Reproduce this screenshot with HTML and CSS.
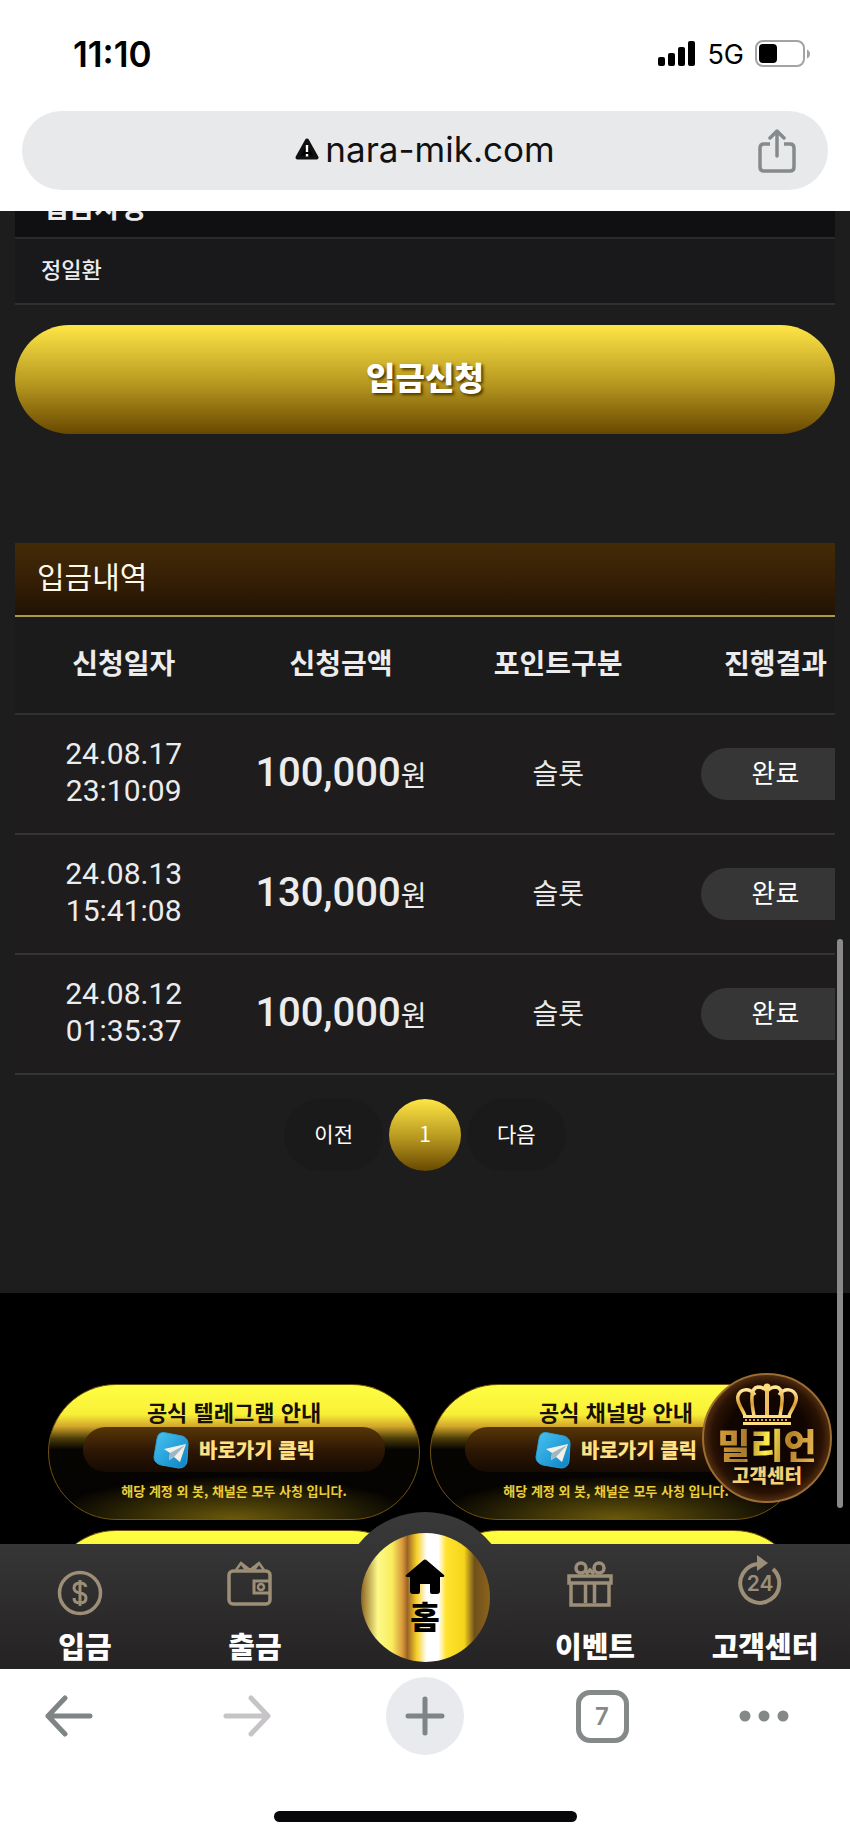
FILE: index.html
```html
<!DOCTYPE html>
<html lang="ko">
<head>
<meta charset="utf-8">
<meta name="viewport" content="width=device-width, initial-scale=1">
<title>nara-mik.com</title>
<link rel="stylesheet" href="styles.css">
</head>
<body>
<div class="phone">
  <header class="browser-top">
    <div class="status">
      <span class="clock">11:10</span>
      <div class="status-right">
        <svg width="38" height="26" viewBox="0 0 38 26" aria-hidden="true"><rect x="0" y="16" width="7" height="9" rx="2"/><rect x="10" y="12" width="7" height="13" rx="2"/><rect x="20" y="6" width="7" height="19" rx="2"/><rect x="30" y="0" width="7" height="25" rx="2"/></svg>
        <span class="network">5G</span>
        <svg width="56" height="28" viewBox="0 0 56 28" aria-hidden="true"><rect x="1" y="1" width="48" height="25" rx="7" fill="none" stroke="#a3a3a5" stroke-width="2"/><rect x="4" y="4" width="18" height="19" rx="4"/><path d="M52 9.500q3 1.500 3 4.500t-3 4.500z" fill="#a3a3a5"/></svg>
      </div>
    </div>
    <div class="address">
      <a class="url" href="#"><svg width="24" height="22" viewBox="0 0 24 22" aria-hidden="true"><path d="M12 2.500 21.500 19.500H2.500z" stroke="#111" stroke-width="4" stroke-linejoin="round"/><path d="M12 7v7M12 16v2.500" stroke="#fff" stroke-width="2.400"/></svg>nara-mik.com</a>
      <button class="share" aria-label="공유"><svg width="38" height="44" viewBox="0 0 38 44" fill="none" stroke="#868a8c" stroke-width="3.500" stroke-linecap="round" stroke-linejoin="round"><path d="M12 15H6q-4 0-4 4v19q0 4 4 4h26q4 0 4-4V19q0-4-4-4h-6" stroke-linecap="butt"/><path d="M19 27V3M12 9l7-7 7 7"/></svg></button>
    </div>
  </header>

  <main class="site">
    <section class="deposit">
      <div class="field">
        <div class="field-label">입금자명</div>
        <div class="field-value">정일환</div>
      </div>
      <button class="submit">입금신청</button>
      <div class="history">
        <h2>입금내역</h2>
        <table>
          <thead><tr><th>신청일자</th><th>신청금액</th><th>포인트구분</th><th>진행결과</th></tr></thead>
          <tbody>
            <tr><td class="date">24.08.17<br>23:10:09</td><td><b>100,000</b>원</td><td>슬롯</td><td><span class="state">완료</span></td></tr>
            <tr><td class="date">24.08.13<br>15:41:08</td><td><b>130,000</b>원</td><td>슬롯</td><td><span class="state">완료</span></td></tr>
            <tr><td class="date">24.08.12<br>01:35:37</td><td><b>100,000</b>원</td><td>슬롯</td><td><span class="state">완료</span></td></tr>
          </tbody>
        </table>
      </div>
      <nav class="pages" aria-label="페이지"><button>이전</button><button class="current">1</button><button>다음</button></nav>
    </section>

    <section class="banners">
      <a class="banner" href="#"><strong>공식 텔레그램 안내</strong><span class="go"><svg width="36" height="38" viewBox="0 0 36 38" aria-hidden="true"><defs><linearGradient id="tg" x2="1" y2="1"><stop stop-color="#49c4f2"/><stop offset="1" stop-color="#0c82c4"/></linearGradient></defs><path d="M11 1.500 29 5q6 2 6 8l-1 17q-1 7-8 7L8 34q-7-2-7-8L4 8q1-7 7-6.500z" fill="url(#tg)" stroke="#2b9fd6"/><path d="M11 18 33 13 27 31 21 26 16 29 17 22z" fill="#f3efe9"/><path d="M17 22 32 14 21 26 16 29z" fill="#9fb7c4"/></svg>바로가기 클릭</span><small>해당 계정 외 봇, 채널은 모두 사칭 입니다.</small></a>
      <a class="banner" href="#"><strong>공식 채널방 안내</strong><span class="go"><svg width="36" height="38" viewBox="0 0 36 38" aria-hidden="true"><path d="M11 1.500 29 5q6 2 6 8l-1 17q-1 7-8 7L8 34q-7-2-7-8L4 8q1-7 7-6.500z" fill="url(#tg)" stroke="#2b9fd6"/><path d="M11 18 33 13 27 31 21 26 16 29 17 22z" fill="#f3efe9"/><path d="M17 22 32 14 21 26 16 29z" fill="#9fb7c4"/></svg>바로가기 클릭</span><small>해당 계정 외 봇, 채널은 모두 사칭 입니다.</small></a>
      <div class="banner"></div>
      <div class="banner"></div>
    </section>

    <a class="support" href="#">
      <svg width="62" height="43" viewBox="0 0 62 43" fill="none" aria-hidden="true"><defs><linearGradient id="gold" x2="0" y2="1"><stop stop-color="#ffe79a"/><stop offset=".6" stop-color="#d99c2e"/><stop offset="1" stop-color="#ffe28a"/></linearGradient></defs><g stroke="url(#gold)" stroke-width="3.500"><path d="M9 33C7 26 0 20 2 13S13 4 19 12"/><path d="M18 33C16 22 13 5 22 4q5 0 9 4"/><path d="M53 33c2-7 9-13 7-20S49 4 43 12"/><path d="M44 33C46 22 49 5 40 4q-5 0-9 4"/><path d="M31 7v26" stroke="#f0c060" stroke-width="4"/></g><circle cx="31" cy="4" r="3.500" fill="#ffdc79"/><path d="M7 32h48v3H7zM7 39h48v3H7z" fill="#ffdd82"/><path d="M9 37h44" stroke="#d9a83f" stroke-width="2" stroke-dasharray="2 2"/></svg>
      <strong>밀리언</strong><span>고객센터</span>
    </a>
    <div class="scroll-thumb"></div>

    <nav class="tabbar">
      <a href="#"><svg class="coin" width="46" height="46" viewBox="0 0 46 46" fill="none" stroke="#9c8e77" stroke-width="3.500"><circle cx="23" cy="23" r="20.500"/><path d="M29 17q-1-4-6-4-6 0-6 5 0 4 6 5t6 5q0 5-6 5t-6-5M23 10v26" stroke-width="3"/></svg><span>입금</span></a>
      <a href="#"><svg width="46" height="46" viewBox="0 0 46 46" fill="none" stroke="#9c8e77" stroke-width="3.500"><rect x="2" y="10" width="41" height="33" rx="4"/><path d="M9 9l5-7 9 7 9-7 5 7M14 2l5 7M32 2l-5 7" stroke-width="2.500"/><path d="M43 20H27v12h16M27 20" stroke-width="3"/><circle cx="34" cy="26" r="3" stroke-width="2.500"/></svg><span>출금</span></a>
      <a class="home" href="#"><i class="home-disc"><svg width="40" height="36" viewBox="0 0 40 36"><path d="M18 1.500q2-2 4 0L39 16q1 2-1 2h-3v14q0 3-3 3h-5q-2 0-2-2v-8H15v8q0 2-2 2H8q-3 0-3-3V18H2q-2 0-1-2z"/></svg><b>홈</b></i></a>
      <a href="#"><svg width="46" height="46" viewBox="0 0 46 46" fill="none" stroke="#9c8e77" stroke-width="3.500"><circle cx="14" cy="7" r="5"/><circle cx="32" cy="7" r="5"/><path d="M19 13l4-4 4 4M2 15h42v7H2zM4 22v22h38V22M18.500 22v20M27.500 22v20"/></svg><span>이벤트</span></a>
      <a href="#"><svg width="46" height="52" viewBox="0 0 46 52"><path d="M36 14A19.500 19.500 0 1 1 20 9" fill="none" stroke="#9c8e77" stroke-width="4"/><path d="M20 0l11 8-11 8z" fill="#9c8e77"/><text x="23" y="36" text-anchor="middle" class="h24">24</text></svg><span>고객센터</span></a>
    </nav>
  </main>

  <footer class="browser-bottom">
    <div class="tools">
      <button aria-label="뒤로"><svg width="48" height="42" viewBox="0 0 48 42" fill="none" stroke="#7f8586" stroke-width="5" stroke-linecap="round" stroke-linejoin="round"><path d="M45 21H3M20 3 3 21l17 18"/></svg></button>
      <button aria-label="앞으로"><svg width="48" height="42" viewBox="0 0 48 42" fill="none" stroke="#c7c4c7" stroke-width="5" stroke-linecap="round" stroke-linejoin="round"><path d="M3 21h42M28 3l17 18-17 18"/></svg></button>
      <button aria-label="새 탭"><span class="plus"><svg width="40" height="40" viewBox="0 0 40 40" fill="none" stroke="#7f8586" stroke-width="5" stroke-linecap="round"><path d="M20 3v34M3 20h34"/></svg></span></button>
      <button aria-label="탭"><span class="tabs">7</span></button>
      <button aria-label="메뉴"><svg width="50" height="12" viewBox="0 0 50 12" fill="#858888"><circle cx="6" cy="6" r="5.500"/><circle cx="25" cy="6" r="5.500"/><circle cx="44" cy="6" r="5.500"/></svg></button>
    </div>
    <div class="indicator"></div>
  </footer>
</div>
</body>
</html>
```
FILE: styles.css
```css
* { box-sizing: border-box; }
body {
  margin: 0;
  background: #fff;
  font-family: "Noto Sans CJK KR", sans-serif;
}
button { font: inherit; border: 0; padding: 0; background: none; color: inherit; }
a { color: inherit; text-decoration: none; }
svg { display: block; flex: none; }

.phone { display: flex; flex-direction: column; }

/* Browser chrome, top */
.browser-top { padding: 30px 22px 21px; font-family: Inter, sans-serif; }
.status {
  display: flex;
  justify-content: space-between;
  align-items: center;
  height: 48px;
  padding: 0 17px 0 51px;
}
.clock { font-size: 35px; font-weight: 600; }
.status-right { display: flex; align-items: center; gap: 11px; }
.network { font-size: 27px; font-weight: 400; }
.address {
  display: grid;
  grid-template-columns: 70px 1fr 70px;
  align-items: center;
  height: 79px;
  margin-top: 33px;
  border-radius: 40px;
  background: #e8e9eb;
}
.url {
  grid-column: 2;
  display: flex;
  justify-content: center;
  align-items: center;
  gap: 6px;
  padding-bottom: 4px;
  font-size: 35px;
  color: #111;
}
.share { display: flex; }

/* Deposit page */
.site {
  position: relative;
  height: 1458px;
  overflow: hidden;
  background: #000;
  color: #ececec;
}
.deposit { height: 1082px; padding: 0 15px; background: #1e1d1d; overflow: hidden; }
.field { background: #19191b; border-bottom: 2px solid #303032; }
.field-label {
  display: flex;
  align-items: flex-end;
  height: 28px;
  padding: 0 28px 13px;
  overflow: hidden;
  background: #101012;
  border-bottom: 2px solid #2b2b2d;
  font-size: 28px;
  font-weight: 700;
  line-height: 36px;
}
.field-value { padding: 0 26px 6px; font-size: 22px; line-height: 58px; font-weight: 500; }
.submit {
  display: block;
  width: 100%;
  height: 109px;
  margin-top: 20px;
  padding-bottom: 8px;
  border-radius: 56px;
  background: linear-gradient(#ffe646, #b5961f 55%, #684800);
  color: #fff;
  font-size: 32px;
  font-weight: 900;
  text-shadow: 2px 2px 3px #4a3500;
}
.history { margin-top: 109px; overflow: hidden; background: #1c1b1c; }
.history h2 {
  margin: 0;
  padding: 0 22px 8px;
  border-bottom: 2px solid #aa9a47;
  background: linear-gradient(#432b08, #361f05 50%, #211204);
  color: #fffbea;
  font-size: 30px;
  font-weight: 400;
  line-height: 64px;
}
.history table {
  width: 106%;
  border-collapse: collapse;
  table-layout: fixed;
  text-align: center;
}
.history th { height: 97px; padding: 0 0 7px; border-bottom: 2px solid #303031; font-size: 28px; font-weight: 700; }
.history td { height: 120px; padding: 0 0 4px; border-bottom: 2px solid #353435; background: #1e1c1d; font-size: 28px; }
.history .date { font-family: Roboto, sans-serif; font-size: 30px; line-height: 37px; }
.history b { font-family: Roboto, sans-serif; font-size: 40px; font-weight: 500; }
.state {
  display: block;
  width: 150px;
  margin: 4px auto 0;
  padding-bottom: 4px;
  border-radius: 26px 0 0 26px;
  background: #373637;
  color: #fff;
  font-size: 26px;
  line-height: 48px;
}
.pages { display: flex; justify-content: center; gap: 6px; margin-top: 24px; }
.pages button {
  height: 72px;
  min-width: 72px;
  padding: 0 30px 4px;
  border-radius: 36px;
  background: #1b1a1b;
  color: #fff;
  font-size: 21px;
}
.pages .current { padding: 0 0 4px; background: linear-gradient(#ffe646, #b5961f 55%, #684800); }

/* Channel banners */
.banners {
  display: grid;
  grid-template-columns: 1fr 1fr;
  gap: 10px;
  padding: 91px 48px 0;
}
.banner {
  display: flex;
  flex-direction: column;
  align-items: center;
  height: 136px;
  padding-top: 11px;
  border: 1px solid #6f5310;
  border-radius: 68px;
  background:
    radial-gradient(ellipse 50% 32% at 50% 100%, #6b5a0a, transparent),
    linear-gradient(#ffff42, #f8ef37 22%, #d1a52a 31%, #4a3b08 40%, #070502 48%, #030201);
}
.banner strong { color: #171002; font-size: 22px; line-height: 31px; }
.go {
  display: flex;
  justify-content: center;
  align-items: center;
  gap: 10px;
  width: 302px;
  max-width: 82%;
  height: 45px;
  border-radius: 23px;
  background: linear-gradient(#583607, #2c1604 55%, #160a02);
  color: #ffe082;
  font-size: 20px;
  font-weight: 900;
}
.banner small { margin-top: 8px; color: #edce38; font-size: 13px; font-weight: 700; line-height: 22px; white-space: nowrap; }

/* Floating support badge */
.support {
  position: absolute;
  right: 18px;
  bottom: 166px;
  display: flex;
  flex-direction: column;
  align-items: center;
  width: 130px;
  height: 130px;
  padding-top: 8px;
  border: 2px solid #9b6c33;
  border-radius: 50%;
  background: radial-gradient(circle, #100500 45%, #2a1204 62%, #4b2a0e 70%);
}
.support strong {
  background: linear-gradient(100deg, #d8a13a, #a87a2b 30%, #fff04c 50%, #b57e28 70%, #ecc057);
  -webkit-background-clip: text;
  background-clip: text;
  color: transparent;
  font-size: 36px;
  font-weight: 900;
  line-height: 36px;
}
.support span { margin-top: 3px; color: #f6cf77; font-size: 19px; font-weight: 900; line-height: 20px; }
.scroll-thumb {
  position: absolute;
  right: 7px;
  top: 728px;
  width: 6px;
  height: 569px;
  border-radius: 3px;
  background: #8b898a;
}

/* Site tab bar */
.tabbar {
  position: absolute;
  left: 0;
  right: 0;
  bottom: 0;
  display: grid;
  grid-template-columns: repeat(5, 1fr);
  grid-template-rows: 125px;
  background: linear-gradient(#373637, #242223);
}
.tabbar a { display: flex; flex-direction: column; align-items: center; justify-content: flex-end; gap: 20px; padding-bottom: 5px; }
.tabbar a svg { margin-right: 10px; }
.tabbar .coin { margin-bottom: -9px; }
.tabbar span { color: #fff; font-size: 29px; font-weight: 900; line-height: 37px; }
.tabbar .home {
  justify-self: center;
  align-self: end;
  justify-content: center;
  width: 170px;
  height: 157px;
  padding: 13px 0 0;
  border-radius: 85px 85px 0 0;
  background: linear-gradient(#3a393a, #363536 25%, #242223);
}
.tabbar .home-disc {
  display: flex;
  flex-direction: column;
  align-items: center;
  justify-content: center;
  width: 129px;
  height: 129px;
  border-radius: 50%;
  background: linear-gradient(90deg, #8c6522, #fdf98a 13%, #f9ed5e 24%, #d99a3c 32%, #9b6327 36%, #f5cf25 43%, #fff 51%, #fff 60%, #ffe32e 66%, #f5d51b 80%, #70501b 88%, #8c641c);
  color: #000;
  font-style: normal;
}
.tabbar .home-disc svg { margin: 0; }
.home-disc b { font-size: 32px; font-weight: 900; line-height: 40px; }
.h24 { fill: #9c8e77; font-family: Inter, sans-serif; font-size: 21px; font-weight: 600; }

/* Browser chrome, bottom */
.browser-bottom { display: flex; flex-direction: column; align-items: center; background: #fff; height: 170px; padding-top: 8px; }
.tools { display: grid; grid-template-columns: 138fr 218fr 138fr 216fr 108fr; width: 100%; padding-right: 32px; }
.tools button { display: flex; align-items: center; justify-content: center; height: 78px; }
.plus { display: flex; align-items: center; justify-content: center; width: 78px; height: 78px; border-radius: 50%; background: #e9eaed; }
.tabs {
  display: flex;
  align-items: center;
  justify-content: center;
  width: 53px;
  height: 53px;
  border: 5px solid #858989;
  border-radius: 14px;
  color: #858989;
  font-family: Inter, sans-serif;
  font-size: 24px;
  font-weight: 600;
}
.indicator { width: 303px; height: 11px; margin-top: 56px; border-radius: 6px; background: #08070a; }
```
